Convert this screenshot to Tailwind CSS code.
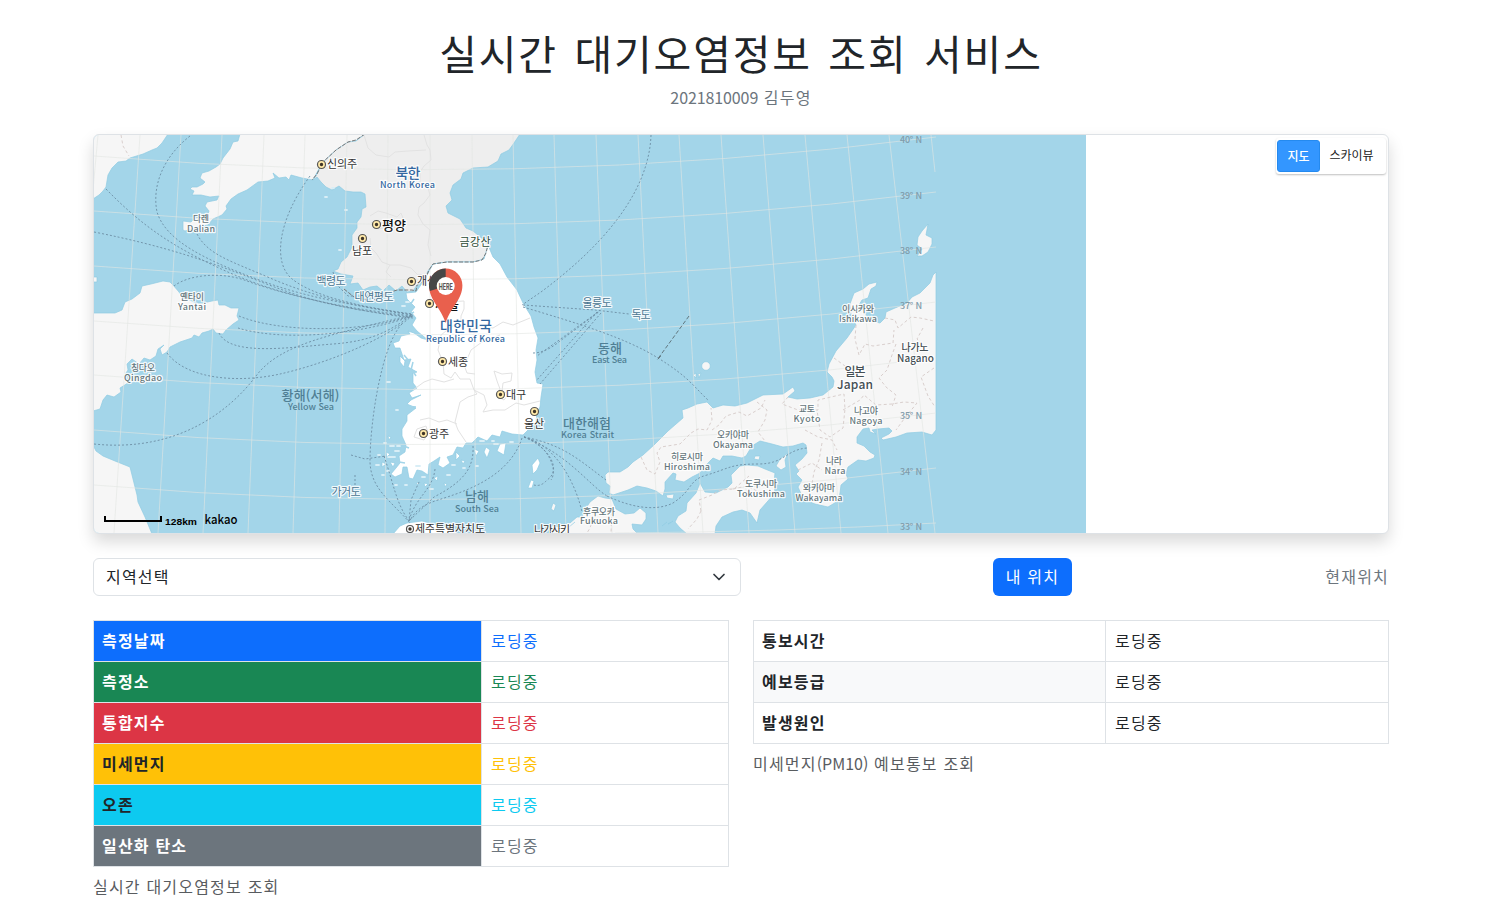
<!DOCTYPE html>
<html lang="ko">
<head>
<meta charset="utf-8">
<title>실시간 대기오염정보 조회 서비스</title>
<script src="https://cdn.jsdelivr.net/npm/@tailwindcss/browser@4"></script>
</head>
<body class="h-[911px] overflow-hidden bg-white font-['Noto_Sans_CJK_KR',sans-serif] text-base leading-6 tracking-[1.2px] text-[#212529]">
<main class="ml-[93px] flex w-[1296px] flex-col">
  <header class="flex flex-col items-center pt-7 text-center">
    <h1 class="text-[41px] leading-[48px] font-normal tracking-[1.8px] [word-spacing:3.4px] whitespace-nowrap">실시간 대기오염정보 조회 서비스</h1>
    <p class="mt-[9px] text-[#6c757d]"><span class="tracking-[-0.1px]">2021810009</span> 김두영</p>
  </header>

  <section class="relative mt-[25px] h-[400px] overflow-visible rounded-md border border-[#dee2e6] bg-white shadow-[0_8px_16px_rgba(0,0,0,0.15)]">
    <svg class="block h-[398px] w-[1294px] rounded-[5px] tracking-normal" viewBox="94 135 1294 398" fill="none">
      <rect x="94" y="135" width="992" height="398" fill="#a3d5e9"/>
      <!-- neighbouring land -->
      <g fill="#f6f6f6" stroke="#8fcbe3" stroke-width=".7" stroke-linejoin="round">
        <path d="M93 134H168L162 143 157 148 152 150 143 154 130 158 126 161 118 162 112 168 108 175 107 181 106 187 103 191 99 195 93 199Z"/>
        <path d="M240 134 238 141 233 142 230 149 223 158 220 164 216 167 209 171 202 173 200 178 205 182 203 184 197 187 192 187 190 189 194 191 192 195 201 195 210 197 219 196 217 200 207 202 205 206 209 211 208 214 202 218 195 218 191 222 183 221 183 230 185 231 197 227 208 225 213 219 222 215 227 209 226 206 231 199 238 194 247 190 258 182 268 181 275 178 273 173 279 178 286 177 289 180 291 175 302 178 313 180 322 163 366 134Z"/>
        <path d="M93 313 115 313 122 310 125 302 132 299 140 293 142 286 151 284 163 281 170 282 173 285 179 292 183 298 190 300 196 303 203 303 212 301 218 300 219 305 225 305 231 308 239 308 237 316 239 320 233 324 226 330 223 334 216 333 213 329 209 331 202 333 199 337 194 335 192 338 180 342 170 347 167 352 162 355 160 349 164 345 158 349 156 356 150 360 144 358 139 364 132 359 127 364 128 370 124 376 128 383 120 388 121 392 114 397 107 395 103 400 100 409 93 411Z"/>
        <path d="M93 277h4v5h-4zM93 445 96 451 103 456 115 461 130 467 133 479 137 495 138 502 145 517 152 534 93 534Z"/>
        <path d="M605 475 608 472 613 472 620 472 628 467 633 462 643 455 654 445 668 431 683 418 682 410 688 408 697 404 707 402 713 408 723 405 735 406 747 403 763 395 783 394 793 387 795 391 788 397 797 399 810 398 823 395 833 387 834 381 832 377 827 372 829 364 836 351 847 338 856 325 851 315 850 304 854 293 863 289 869 284 877 282 876 286 871 289 868 298 862 300 859 305 863 310 869 319 872 321 880 323 885 318 886 312 895 308 907 303 912 297 920 293 930 283 933 275 936 272V430L932 435 922 432 907 433 896 437 883 440 881 438 889 434 892 431 889 428 878 429 872 430 876 434 870 432 869 428 863 429 857 437 857 443 864 446 870 452 875 455 874 458 866 461 858 460 848 467 846 474 848 479 841 485 840 493 838 501 828 507 815 504 810 502 802 496 798 487 802 480 796 474 799 471 795 465 802 459 807 453 806 445 803 443 793 446 783 447 772 444 760 441 752 446 746 456 742 458 732 456 723 456 720 461 713 458 705 466 700 473 692 477 684 482 675 480 676 474 673 473 665 482 665 489 663 496 656 491 647 488 637 486 628 490 613 495 609 493 610 486 606 483Z"/>
        <path d="M788 453 785 460 786 467 781 470 776 466 780 459ZM687 534 680 528 675 522 678 516 686 511 687 503 696 493 700 483 705 492 716 493 728 487 732 483 731 475 740 466 747 465 758 466 765 469 775 473 774 482 775 493 760 510 757 523 750 513 742 510 733 512 722 517 716 526 715 534Z"/>
        <path d="M550 534 552 525 559 527 570 523 577 517 582 517 586 508 590 502 598 496 605 498 612 499 616 509 625 514 634 513 640 508 646 513 646 519 642 525 632 524 633 529 638 534Z"/>
        <path d="M928 224 926 235 932 238 932 244 928 252 922 256 917 256 922 249 917 245 918 237 922 231ZM666 495 674 494 673 499 667 498ZM755 456 760 456 759 460 754 459Z"/>
        <circle cx="706" cy="366" r="4.3"/><path d="M693 375l3-2v5zM698 374l3-1-2 5zM553 503l3 2-2 6-3-2z"/>
        <path d="M673 521l-5 3 4-2zM667 522l-5 4M575 522l-6 5"/>
      </g>
      <path d="M365 134 356 141 348 142 336 150 322 163 317 174 313 180 317 177 321 182 326 187 332 190 339 186 345 191 353 192 361 192 365 194 366 207 362 209 361 217 357 222 357 228 352 235 352 247 347 257 341 262 338 269 333 271 341 274 353 276 350 284 358 283 363 290 370 287 377 286 383 291 389 285 396 291 402 286 407 292 413 291 417 285 424 280 428 271 433 264 447 262 473 262 482 260 487 253 488 245 484 240 473 231 466 228 460 219 448 213 446 206 452 200 450 193 453 185 461 179 463 173 473 168 488 167 498 161 501 154 509 150 514 143 520 134Z" fill="#eee" stroke="#8fcbe3" stroke-width=".7"/>
      <path d="M488 245 493 257 500 264 507 277 517 290 523 303 531 316 534 327 538 338 536 350 537 360 535 372 537 383 543 384 541 397 540 407 537 412 536 423 529 429 523 435 512 434 502 431 500 437 492 435 487 441 478 437 472 443 466 443 463 448 457 447 453 455 447 457 450 463 443 468 438 465 440 457 434 461 429 464 428 475 422 471 417 470 413 479 409 478 407 467 403 467 402 474 395 477 391 474 396 468 400 463 399 456 405 452 406 445 402 436 402 429 407 421 407 415 416 408 407 404 411 400 421 395 412 398 409 393 417 388 413 383 413 373 417 372 408 367 411 359 404 360 402 354 400 348 395 348 393 343 399 341 401 336 410 334 408 331 414 333 421 338 428 340 417 331 412 325 416 318 411 312 415 307 407 299 406 293 416 292 425 279 433 264 447 262 473 262 484 259Z" fill="#fff" stroke="#8fcbe3" stroke-width=".7"/>
      <path d="M393 534 400 526 407 523 422 521 437 525 451 528 458 534ZM538 458 540 463 537 470 533 474 532 465ZM531 480 534 481 532 488 528 488ZM500 444 506 443 504 455 497 451ZM486 447 490 450 487 458 484 452ZM474 449l5 2-3 5zM456 452l4 4-4 4zM461 460l4 1-2 3zM386 452l4 2-3 3zM388 436l3 1-2 3zM382 462l4 2-4 3zM390 462l5 1-2 4zM416 483l4-1-2 3zM424 483l4 1-3 3zM434 478l4-2-1 5zM444 483l3 1-2 3zM400 356l5 5-1 6-4-5z" fill="#fff" stroke="#8fcbe3" stroke-width=".7"/>
      <!-- small island groups along the south-west shore -->
      <path d="M378 455h2M384 443h2M376 465h3M390 446h4M387 471h2M388 457h7M395 451h4M395 485h2M405 485h2M430 489h3M447 475h3M463 468h2M476 466h2M510 442h3M492 441h2M382 475h2M397 446h3M422 477h3M452 465h3M480 441h4M494 444h4M416 466h4M387 382h3M396 410h2M341 277h2M332 188h2M345 210h2M339 250h2M406 302h3M402 306h3M325 197h2" stroke="#d9eef6" stroke-width="1.800" stroke-linecap="round"/>
      <path d="M411 368l5 8M413 362l-2 8M404 355l5 6M430 468l9 3M466 449l8 4M485 443l7 3M401 445l8 3M399 462l6 1M406 406l10 1M414 299l-4 6M414 312l-7 4" stroke="#a3d5e9" stroke-width="1.5"/>

      <!-- graticule -->
      <g stroke="#e3e6e2" stroke-opacity=".6">
        <path d="M98 135 93 190M140 135 114 533M181 135 158 533M222 135 203 533M264 135 248 533M305 135 293 533M347 135 339 533M388 135 385 533M430 135V533M472 135 476 533M513 135 521 533M554 135 566 533M596 135 612 533M638 135 658 533M679 135 703 533M721 135 749 533M763 135 795 533M805 135 841 533M847 135 888 533M889 135 935 533M931 135 935 172"/>
        <path d="M94 156Q514 191 936 137M94 211Q514 246 936 192M94 266Q514 301 936 247M94 321Q514 356 936 302M94 375Q514 411 936 358M94 430Q514 466 936 413M94 485Q514 521 936 468M615 533Q780 532 936 523"/>
      </g>

      <!-- province borders -->
      <g stroke="#e2e2e2">
        <path d="M424 135 427 145 430 150 431 160 424 166 420 172 420 185 428 188 430 195 424 203 419 207 418 215 423 224 430 230 428 245 431 256M364 135 368 148 376 155 389 157 395 152 408 151 426 150M370 216 378 211 386 213 397 217 401 213 404 221 399 228 389 227 378 229 371 222M370 238 371 248 376 253 382 262 390 265 400 265M400 265 411 268 418 275 428 274M390 265 386 272 391 277"/>
        <path d="M434 295 446 302 464 301 464 309 461 316 461 322 451 327M451 327 441 335 438 350 443 362 444 374 451 378 455 372 460 379 470 379 474 390M461 322 472 330 480 326 493 328 503 322 513 325 530 318M500 335 482 342 471 350 468 357 464 365 467 373 475 374M413 390 424 382 432 379 444 382 454 379M474 390 477 394 468 397 460 402 458 410 455 422 458 430 466 442M420 420 429 418 439 422 447 420 457 424M417 429 426 426 428 433 424 440 414 437ZM474 390 484 395 487 405 483 412 493 410 505 410 516 403 524 405 532 403 540 401M494 371 502 374 512 373 511 381 503 383 502 391 509 394 504 400 497 396 500 389 497 381Z"/>
      </g>
      <g stroke="#d9cfcd" stroke-dasharray="3 2.5">
        <path d="M121 135 123 146 129 156"/>
        <path d="M641 457 647 470 655 474 660 462 657 453 661 447 680 444 691 433 698 429 707 430 712 420 711 408M712 430 719 425 726 416 739 412 747 416 761 408 765 400M757 402 767 410 765 420 758 432 765 441M788 397 782 404 798 410 818 410 818 400 831 397 844 394 845 409 843 428 830 437 820 430 817 410M805 430 818 437 832 440 837 450M822 443 819 460 814 472 812 484M843 410 860 400 864 395 876 405 892 404 904 402 917 403 904 419 896 430M856 325 855 339 859 355 865 344 873 346 893 343 894 330M834 358 845 366 853 367M896 344 892 355 887 370 879 378 886 387 896 395 892 407M923 328 917 339 925 347M934 368 921 377 928 396 935 407M885 318 895 320 898 328 911 317 920 318 934 321"/>
        <path d="M701 511 699 500 712 495 720 490 734 489 749 476M701 511 697 519 688 529M733 489 747 486 763 494M593 519 590 528 587 533M612 512 611 533M798 470 812 463 822 470"/>
      </g>

      <!-- ferry routes -->
      <g stroke="#6d8ea4" stroke-opacity=".9" stroke-dasharray="2 2">
        <path d="M190 136C162 158 152 187 157 212C166 241 205 260 262 281S372 307 413 315"/>
        <path d="M106 189C142 226 172 246 219 268S322 306 413 316M94 232C165 246 211 262 264 283S357 311 413 317M197 234C208 255 231 261 270 278S360 308 413 315M174 286C188 275 221 271 247 281S345 310 413 318"/>
        <path d="M310 176C276 223 274 263 291 278S350 306 413 314M239 316C280 333 364 333 413 315M238 328C280 341 355 336 413 316M219 333C230 357 292 347 333 344S390 330 411 316M167 353C187 380 240 383 280 374S380 343 412 316M94 444C180 453 232 408 256 376S330 335 412 315"/>
        <path d="M402 324C382 344 370 420 370 462C371 489 390 500 410 523M333 272 337 285 348 296 385 296"/>
        <path d="M651 135C649 194 600 248 541 292L522 305M523 305 595 310 629 314M523 307C580 324 626 338 658 358S693 386 709 401M598 312 537 356M601 313 540 384M597 312 536 381M533 353C543 353 553 347 560 341L600 311"/>
        <path d="M351 455 365 459 386 456M355 475V491M384 456C394 485 396 503 409 521M473 446C474 467 465 481 434 497L409 521M435 469C433 490 415 497 409 521M419 482 411 500 409 521M522 438C509 478 463 492 438 500S413 518 409 521"/>
        <path d="M524 437C550 448 562 470 547 480Q541 487 534 485M524 437C546 443 559 469 551 480M524 437C559 446 577 489 582 512M524 437C568 454 589 485 607 496M524 437C565 445 580 461 606 480M607 496C630 507 655 512 673 503C694 489 688 480 707 475C730 468 731 464 758 464S785 450 807 448"/>
      </g>
      <path d="M689 316 657 360M658 359 661 356" stroke="#61777f" stroke-dasharray="4 2"/>
      <path d="M365 134 356 140 348 142 336 150 323 162 317 174 312 180M344 289 354 297 372 301 385 294 397 290 412 290 416 291 417 285 425 280 429 270 433 264 447 262 473 262 482 260 486 253 488 245" stroke="#777" stroke-dasharray="4 1.5"/>

      <!-- city dots -->
      <g fill="#ffe9a8" stroke="#555" stroke-width="1.2">
        <circle cx="321.500" cy="164.500" r="4"/><circle cx="376.500" cy="224.500" r="4"/><circle cx="362.500" cy="238.500" r="4"/><circle cx="411.500" cy="281.500" r="4"/><circle cx="429.500" cy="303.500" r="4"/><circle cx="442.500" cy="361.500" r="4"/><circle cx="500.500" cy="394.500" r="4"/><circle cx="534.500" cy="411.500" r="4"/><circle cx="423.500" cy="433.500" r="4"/><circle cx="410" cy="529" r="3.500" fill="#fff"/>
      </g>
      <path d="M321.500 164.500h.01M376.500 224.500h.01M362.500 238.500h.01M411.500 281.500h.01M429.500 303.500h.01M442.500 361.500h.01M500.500 394.500h.01M534.500 411.500h.01M423.500 433.500h.01M410 529h.01" stroke="#3d3327" stroke-width="3.400" stroke-linecap="round"/>

      <!-- labels -->
      <g font-family="'Noto Sans CJK KR', sans-serif" paint-order="stroke" stroke="#fff" stroke-opacity=".85" stroke-width="2.4" stroke-linejoin="round" text-anchor="middle" font-weight="500">
        <g fill="#333" font-size="11" font-weight="400">
          <text x="342" y="168" textLength="30">신의주</text><text x="394" y="230" font-size="13" font-weight="500" textLength="24" fill="#111">평양</text><text x="362" y="255" textLength="20">남포</text><text x="475" y="246" textLength="31" fill="#2c4a35">금강산</text><text x="427" y="285" textLength="20">개성</text><text x="447" y="309" font-size="13" font-weight="500" textLength="24" fill="#111">서울</text><text x="458" y="366" textLength="20">세종</text><text x="516" y="398.500" textLength="20">대구</text><text x="534" y="428" textLength="20">울산</text><text x="439" y="438" textLength="20">광주</text><text x="450" y="532.500" textLength="70">제주특별자치도</text><text x="552" y="534" textLength="36">나가사키</text>
        </g>
        <g fill="#4b7692" font-size="11" font-weight="400"><text x="331" y="285" textLength="29">백령도</text><text x="374" y="301" textLength="39">대연평도</text><text x="346" y="496" textLength="29">가거도</text><text x="597" y="307" textLength="29">울릉도</text><text x="641" y="319" textLength="19">독도</text></g>
        <g fill="#3367a0"><text x="408" y="178" font-size="14" textLength="25">북한</text><text x="407.500" y="188" font-size="9" textLength="55">North Korea</text><text x="466" y="331" font-size="14" textLength="52">대한민국</text><text x="465.500" y="342" font-size="9" textLength="79">Republic of Korea</text></g>
        <g fill="#66777c" font-size="9">
          <text x="201" y="222" textLength="16">다롄</text><text x="201" y="232" textLength="28">Dalian</text><text x="192" y="300" textLength="24">옌타이</text><text x="192" y="310" textLength="28">Yantai</text><text x="143" y="371" textLength="24">칭다오</text><text x="143" y="381" textLength="38">Qingdao</text>
          <text x="858" y="312" textLength="32">이시카와</text><text x="858" y="322" textLength="38">Ishikawa</text><text x="807" y="412" textLength="16">교토</text><text x="807" y="422" textLength="27">Kyoto</text><text x="866" y="413.500" textLength="24">나고야</text><text x="866" y="424" textLength="33">Nagoya</text><text x="733" y="438" textLength="32">오카야마</text><text x="733" y="448" textLength="40">Okayama</text><text x="687" y="460" textLength="32">히로시마</text><text x="687" y="470" textLength="46">Hiroshima</text><text x="834" y="464" textLength="16">나라</text><text x="835" y="474" textLength="21">Nara</text><text x="761" y="487" textLength="32">도쿠시마</text><text x="761" y="497" textLength="48">Tokushima</text><text x="819" y="491" textLength="32">와카야마</text><text x="819" y="501" textLength="47">Wakayama</text><text x="599" y="515" textLength="32">후쿠오카</text><text x="599" y="524" textLength="38">Fukuoka</text>
        </g>
        <g fill="#444f54"><text x="915" y="351" font-size="10" textLength="27">나가노</text><text x="915.500" y="362" font-size="10" textLength="37">Nagano</text><text x="855" y="376" font-size="12" textLength="21">일본</text><text x="855" y="389" font-size="12" textLength="36">Japan</text></g>
        <g fill="#507f94" stroke="none"><text x="310.500" y="400" font-size="13" textLength="58">황해(서해)</text><text x="311" y="410" font-size="9" textLength="46">Yellow Sea</text><text x="610" y="353" font-size="13" textLength="24">동해</text><text x="609.500" y="363" font-size="9" textLength="35">East Sea</text><text x="587" y="428" font-size="13" textLength="48">대한해협</text><text x="587.500" y="438" font-size="9" textLength="53">Korea Strait</text><text x="477" y="501" font-size="13" textLength="24">남해</text><text x="477" y="512" font-size="9" textLength="44">South Sea</text></g>
        <g fill="#7f9baa" stroke="none" font-size="9"><text x="911" y="143" textLength="22">40° N</text><text x="911" y="199" textLength="22">39° N</text><text x="911" y="254" textLength="22">38° N</text><text x="911" y="309" textLength="22">37° N</text><text x="911" y="419" textLength="22">35° N</text><text x="911" y="475" textLength="22">34° N</text><text x="911" y="530" textLength="22">33° N</text></g>
      </g>

      <!-- current position marker -->
      <path d="M445.700 323C441 308 429 300 429 285.300a16.700 16.700 0 0 1 33.400 0C462.400 300 450 308 445.700 323Z" fill="#e9604d"/>
      <path d="M445.700 268.600V286L429.900 291A16.700 16.700 0 0 1 445.700 268.600Z" fill="#474747"/>
      <circle cx="445.700" cy="286" r="9" fill="#fff"/>
      <text x="445.700" y="289.500" text-anchor="middle" font-family="Roboto, sans-serif" font-size="9" font-weight="700" textLength="14" lengthAdjust="spacingAndGlyphs" fill="#5a5555">HERE</text>

      <!-- scale bar -->
      <path d="M105 516V521H161V516" stroke="#000" stroke-width="2"/>
      <text x="165" y="525" font-family="'Liberation Sans', sans-serif" font-size="9.500" font-weight="700" textLength="32" lengthAdjust="spacingAndGlyphs" fill="#000">128km</text>
      <text x="204.500" y="524" font-family="'Noto Sans CJK KR', sans-serif" font-size="12.500" font-weight="500" textLength="33" lengthAdjust="spacingAndGlyphs" fill="#000">kakao</text>
    </svg>
    <div class="absolute top-[3px] right-0.5 flex h-9 w-[110px] items-center rounded-[3px] bg-white p-px text-xs tracking-normal text-[#222] shadow-[0_1px_2px_rgba(0,0,0,0.25)]">
      <button class="h-8 w-[43px] rounded-[3px] border border-[#258aef] bg-[#3396ff] font-medium text-white">지도</button>
      <button class="h-8 w-[63px] pb-0.5">스카이뷰</button>
    </div>
  </section>

  <section class="mt-6 flex items-center">
    <div class="flex h-[38px] w-[648px] items-center justify-between rounded-md border border-[#dee2e6] px-3">
      <span class="pb-0.5">지역선택</span>
      <svg class="mr-px h-4 w-4" viewBox="0 0 16 16" fill="none" stroke="#343a40" stroke-width="1.700" stroke-linecap="round" stroke-linejoin="round"><path d="m3 5.500 5 5 5-5"/></svg>
    </div>
    <button class="ml-[252px] h-[38px] w-[79px] rounded-md bg-[#0d6efd] pb-0.5 text-white">내 위치</button>
    <span class="ml-auto pb-0.5 text-[#6c757d]">현재위치</span>
  </section>

  <section class="mt-6 flex items-start gap-6">
    <div class="w-[636px]">
      <table class="w-full table-fixed border-collapse text-left [&_td]:border [&_td]:border-[#dee2e6] [&_td]:px-[9px] [&_td]:pb-0.5 [&_th]:w-[388px] [&_th]:border [&_th]:border-[#dee2e6] [&_th]:px-2 [&_th]:pb-0.5 [&_th]:font-bold [&_tr]:h-[41px]">
        <tr class="text-[#0d6efd]"><th class="bg-[#0d6efd] text-white">측정날짜</th><td>로딩중</td></tr>
        <tr class="text-[#198754]"><th class="bg-[#198754] text-white">측정소</th><td>로딩중</td></tr>
        <tr class="text-[#dc3545]"><th class="bg-[#dc3545] text-white">통합지수</th><td>로딩중</td></tr>
        <tr class="text-[#ffc107]"><th class="bg-[#ffc107] text-[#212529]">미세먼지</th><td>로딩중</td></tr>
        <tr class="text-[#0dcaf0]"><th class="bg-[#0dcaf0] text-[#212529]">오존</th><td>로딩중</td></tr>
        <tr class="text-[#6c757d]"><th class="bg-[#6c757d] text-white">일산화 탄소</th><td>로딩중</td></tr>
      </table>
      <p class="pt-[7px] text-[#595c5f]">실시간 대기오염정보 조회</p>
    </div>
    <div class="w-[636px]">
      <table class="w-full table-fixed border-collapse text-left [&_td]:border [&_td]:border-[#dee2e6] [&_td]:px-[9px] [&_td]:pb-0.5 [&_th]:w-[352px] [&_th]:border [&_th]:border-[#dee2e6] [&_th]:px-2 [&_th]:pb-0.5 [&_th]:font-bold [&_tr]:h-[41px]">
        <tr><th>통보시간</th><td>로딩중</td></tr>
        <tr><th class="bg-[#f8f9fa]">예보등급</th><td>로딩중</td></tr>
        <tr><th>발생원인</th><td>로딩중</td></tr>
      </table>
      <p class="pt-[7px] text-[#595c5f]">미세먼지<span class="tracking-normal">(PM10)</span> 예보통보 조회</p>
    </div>
  </section>
</main>
</body>
</html>
